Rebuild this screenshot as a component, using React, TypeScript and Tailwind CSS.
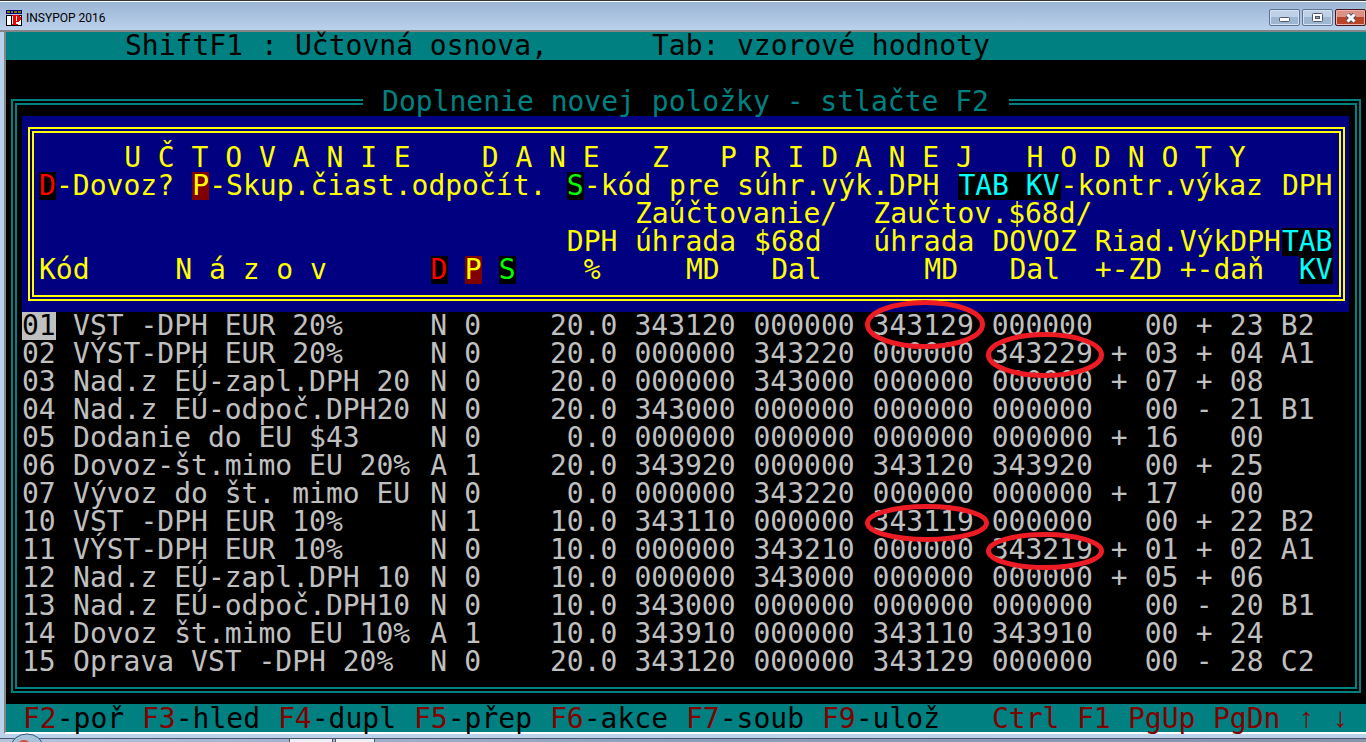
import type { ReactNode } from 'react';

type Segment = { at: number; text: string; tone?: string };
type Mark = { col: 'md2' | 'dal2'; box: string; w: number; h: number };
type Row = {
  kod: string;
  nazov: string;
  d: string;
  p: string;
  dph: string;
  md: string;
  dal: string;
  md2: string;
  dal2: string;
  zdSign: string;
  zd: string;
  danSign: string;
  dan: string;
  kv: string;
  mark?: Mark;
};

const RED = 'bg-black text-[#ff0000]';
const MAROON = 'bg-[#800000] text-[#ffff00]';
const GREEN = 'bg-black text-[#00ff00]';
const CYAN = 'bg-black text-[#00ffff]';

const topLine: Segment[] = [
  { at: 7, text: 'ShiftF1' },
  { at: 15, text: ':' },
  { at: 17, text: 'Učtovná osnova,' },
  { at: 38, text: 'Tab:' },
  { at: 43, text: 'vzorové hodnoty' },
];

const headerLines: Segment[][] = [
  [
    { at: 5, text: 'U Č T O V A N I E' },
    { at: 26, text: 'D A N E' },
    { at: 36, text: 'Z' },
    { at: 40, text: 'P R I D A N E J' },
    { at: 58, text: 'H O D N O T Y' },
  ],
  [
    { at: 0, text: 'D', tone: RED },
    { at: 1, text: '-Dovoz?' },
    { at: 9, text: 'P', tone: MAROON },
    { at: 10, text: '-Skup.čiast.odpočít.' },
    { at: 31, text: 'S', tone: GREEN },
    { at: 32, text: '-kód' },
    { at: 37, text: 'pre' },
    { at: 41, text: 'súhr.výk.DPH' },
    { at: 54, text: 'TAB KV', tone: CYAN },
    { at: 60, text: '-kontr.výkaz' },
    { at: 73, text: 'DPH' },
  ],
  [
    { at: 35, text: 'Zaúčtovanie/' },
    { at: 49, text: 'Zaučtov.$68d/' },
  ],
  [
    { at: 31, text: 'DPH' },
    { at: 35, text: 'úhrada' },
    { at: 42, text: '$68d' },
    { at: 49, text: 'úhrada' },
    { at: 56, text: 'DOVOZ' },
    { at: 62, text: 'Riad.' },
    { at: 67, text: 'VýkDPH' },
    { at: 73, text: 'TAB', tone: CYAN },
  ],
  [
    { at: 0, text: 'Kód' },
    { at: 8, text: 'N á z o v' },
    { at: 23, text: 'D', tone: RED },
    { at: 25, text: 'P', tone: MAROON },
    { at: 27, text: 'S', tone: GREEN },
    { at: 32, text: '%' },
    { at: 38, text: 'MD' },
    { at: 43, text: 'Dal' },
    { at: 52, text: 'MD' },
    { at: 57, text: 'Dal' },
    { at: 62, text: '+-ZD' },
    { at: 67, text: '+-daň' },
    { at: 74, text: 'KV', tone: CYAN },
  ],
];

const row = (line: string, mark?: Mark): Row => {
  const [kod, nazov, d, p, dph, md, dal, md2, dal2, zdSign, zd, danSign, dan, kv] = line.split('|');
  return { kod, nazov, d, p, dph, md, dal, md2, dal2, zdSign, zd, danSign, dan, kv, mark };
};

const rows: Row[] = [
  row('01|VST -DPH EUR 20%|N|0|20.0|343120|000000|343129|000000||00|+|23|B2', { col: 'md2', box: '-left-2 -top-3', w: 120, h: 49 }),
  row('02|VÝST-DPH EUR 20%|N|0|20.0|000000|343220|000000|343229|+|03|+|04|A1', { col: 'dal2', box: '-left-1.5 -top-2', w: 118, h: 46 }),
  row('03|Nad.z EÚ-zapl.DPH 20|N|0|20.0|000000|343000|000000|000000|+|07|+|08|'),
  row('04|Nad.z EÚ-odpoč.DPH20|N|0|20.0|343000|000000|000000|000000||00|-|21|B1'),
  row('05|Dodanie do EU $43|N|0|0.0|000000|000000|000000|000000|+|16||00|'),
  row('06|Dovoz-št.mimo EU 20%|A|1|20.0|343920|000000|343120|343920||00|+|25|'),
  row('07|Vývoz do št. mimo EU|N|0|0.0|000000|343220|000000|000000|+|17||00|'),
  row('10|VST -DPH EUR 10%|N|1|10.0|343110|000000|343119|000000||00|+|22|B2', { col: 'md2', box: '-left-2 -top-1', w: 124, h: 38 }),
  row('11|VÝST-DPH EUR 10%|N|0|10.0|000000|343210|000000|343219|+|01|+|02|A1', { col: 'dal2', box: '-left-1.5 -top-1', w: 118, h: 38 }),
  row('12|Nad.z EÚ-zapl.DPH 10|N|0|10.0|000000|343000|000000|000000|+|05|+|06|'),
  row('13|Nad.z EÚ-odpoč.DPH10|N|0|10.0|343000|000000|000000|000000||00|-|20|B1'),
  row('14|Dovoz št.mimo EU 10%|A|1|10.0|343910|000000|343110|343910||00|+|24|'),
  row('15|Oprava VST -DPH 20%|N|0|20.0|343120|000000|343129|000000||00|-|28|C2'),
];

// column widths in characters, 78 in total
const colWidths = [
  'w-[51px]', 'w-[357px]', 'w-[34px]', 'w-[85px]', 'w-[85px]', 'w-[119px]', 'w-[119px]',
  'w-[119px]', 'w-[119px]', 'w-[34px]', 'w-[51px]', 'w-[34px]', 'w-[51px]', 'w-[68px]',
];

const keys = [
  { at: 1, name: 'F2', label: '-poř' },
  { at: 8, name: 'F3', label: '-hled' },
  { at: 16, name: 'F4', label: '-dupl' },
  { at: 24, name: 'F5', label: '-přep' },
  { at: 32, name: 'F6', label: '-akce' },
  { at: 40, name: 'F7', label: '-soub' },
  { at: 48, name: 'F9', label: '-ulož' },
  { at: 58, name: 'Ctrl', label: '' },
  { at: 63, name: 'F1', label: '' },
  { at: 66, name: 'PgUp', label: '' },
  { at: 71, name: 'PgDn', label: '' },
  { at: 76, name: '↑', label: '' },
  { at: 78, name: '↓', label: '' },
];

const gridPlace = (at: number, length: number) => ({ gridColumn: `${at + 1} / span ${length}` });

function Line({ segments, className }: { segments: Segment[]; className: string }) {
  return (
    <div className={`grid h-7 whitespace-pre ${className}`}>
      {segments.map((s) => (
        <span key={s.at} className={`min-w-0 ${s.tone ?? ''}`} style={gridPlace(s.at, s.text.length)}>
          {s.text}
        </span>
      ))}
    </div>
  );
}

function Ring({ box, w, h }: Mark) {
  return (
    <svg className={`absolute z-10 ${box}`} width={w} height={h} aria-hidden="true">
      <ellipse cx={w / 2} cy={h / 2} rx={w / 2 - 2.5} ry={h / 2 - 2.5} fill="none" stroke="#ed1c24" strokeWidth="5" />
    </svg>
  );
}

function AppIcon() {
  return (
    <svg width="16" height="16" viewBox="0 0 16 16" shapeRendering="crispEdges" aria-hidden="true">
      <rect width="16" height="4" fill="#000080" />
      <path d="M1 1h3v2H1zM5 1h2v2H5zM8 1h3v2H8zM12 1h3v2h-3z" fill="#808000" />
      <rect x="0.5" y="5.5" width="15" height="10" fill="#fff" stroke="#000" />
      <path d="M5.5 5v10" stroke="#000" />
      <path d="M6 5h7v1h1v1h1v3h-1v1h-1v1h-3v2h2v1H6v-1h1V6H6zM10 6v5h1V6z" fill="#f00000" fillRule="evenodd" />
    </svg>
  );
}

function WindowButton({ label, className, children }: { label: string; className: string; children: ReactNode }) {
  return (
    <button type="button" aria-label={label} className={`flex h-[17px] w-[31px] items-center justify-center rounded-xs border ${className}`}>
      {children}
    </button>
  );
}

const glass = 'border-[#5f7494] bg-linear-to-b from-[#bfd1e6] from-50% to-[#9db6d2] to-50% shadow-[inset_0_0_0_1px_#d3e1f0]';

function TitleBar() {
  return (
    <header className="flex h-8 items-center border-t border-[#30353f] border-b-2 border-b-[#858585] bg-linear-to-b from-[#9ab4d3] to-[#bad1ec] pt-1 pl-1.5 shadow-[inset_0_1px_0_#fff]">
      <AppIcon />
      <h1 className="ml-1 flex-1 font-[Roboto,sans-serif] text-[12px] text-black">INSYPOP 2016</h1>
      <div className="flex gap-0.5">
        <WindowButton label="Minimalizovať" className={glass}>
          <svg width="11" height="5" className="mt-1"><rect x="0.5" y="0.5" width="10" height="4" rx="1" fill="#fff" stroke="#535666" /></svg>
        </WindowButton>
        <WindowButton label="Maximalizovať" className={glass}>
          <svg width="11" height="9">
            <rect x="0.5" y="0.5" width="10" height="8" rx="1" fill="#fff" stroke="#535666" />
            <rect x="3.5" y="3.5" width="4" height="2" fill="#8aa4c6" stroke="#535666" />
          </svg>
        </WindowButton>
        <WindowButton label="Zavrieť" className="border-[#4a1420] bg-linear-to-b from-[#dd9184] from-50% to-[#bb4327] to-50% shadow-[inset_0_0_0_1px_#e8b5aa]">
          <svg width="12" height="10">
            <path d="M2.5 1.5l7 7M9.5 1.5l-7 7" stroke="#535666" strokeWidth="5" />
            <path d="M2.5 1.5l7 7M9.5 1.5l-7 7" stroke="#fff" strokeWidth="3" />
          </svg>
        </WindowButton>
      </div>
    </header>
  );
}

export default function App() {
  return (
    <div className="bg-[#b9d1ea]">
      <TitleBar />
      <main className="ml-1 border-b-2 border-l-2 border-b-white border-l-[#858585] bg-black font-['DejaVu_Sans_Mono','Liberation_Mono',monospace] text-[28px] leading-7">
        <Line segments={topLine} className="grid-cols-[repeat(80,minmax(0,1fr))] bg-[#008080] text-black" />

        <fieldset className="mt-7 mr-[5px] ml-[5px] min-w-0 border-6 border-double border-[#008080] pr-1.5 pb-[11px] pl-[5px]">
          <legend className="mx-auto w-[646px] text-center whitespace-nowrap text-[#008080]">
            Doplnenie novej položky - stlačte F2
          </legend>

          <section className="bg-[#000080] py-[11px] pr-1 pl-1.5">
            <div className="border-6 border-double border-[#ffff00] py-[11px] pr-1.5 pl-[5px] text-[#ffff00]">
              {headerLines.map((segments, i) => (
                <Line key={i} segments={segments} className="grid-cols-[repeat(76,minmax(0,1fr))]" />
              ))}
            </div>
          </section>

          <table className="w-full table-fixed whitespace-pre text-[#c0c0c0]">
            <colgroup>
              {colWidths.map((w, i) => (
                <col key={i} className={w} />
              ))}
            </colgroup>
            <tbody>
              {rows.map((r, i) => (
                <tr key={r.kod} className="h-7">
                  <td className="p-0">
                    <span className={i === 0 ? 'block w-[34px] bg-[#c0c0c0] text-black' : 'block'}>{r.kod}</span>
                  </td>
                  <td className="p-0">{r.nazov}</td>
                  <td className="p-0">{r.d}</td>
                  <td className="p-0">{r.p}</td>
                  <td className="p-0 pr-[17px] text-right">{r.dph}</td>
                  <td className="p-0">{r.md}</td>
                  <td className="p-0">{r.dal}</td>
                  <td className="relative p-0">
                    {r.md2}
                    {r.mark?.col === 'md2' && <Ring {...r.mark} />}
                  </td>
                  <td className="relative p-0">
                    {r.dal2}
                    {r.mark?.col === 'dal2' && <Ring {...r.mark} />}
                  </td>
                  <td className="p-0">{r.zdSign}</td>
                  <td className="p-0">{r.zd}</td>
                  <td className="p-0">{r.danSign}</td>
                  <td className="p-0">{r.dan}</td>
                  <td className="p-0">{r.kv}</td>
                </tr>
              ))}
            </tbody>
          </table>
        </fieldset>

        <nav className="mt-[11px] grid h-7 grid-cols-[repeat(80,minmax(0,1fr))] bg-[#008080]">
          {keys.map((k) => (
            <button
              key={k.at}
              type="button"
              className="min-w-0 text-left whitespace-nowrap text-black"
              style={gridPlace(k.at, k.name.length + k.label.length)}
            >
              <span className={/[↑↓]/.test(k.name) ? "font-['Liberation_Mono',monospace] text-[#800000]" : 'text-[#800000]'}>
                {k.name}
              </span>
              {k.label}
            </button>
          ))}
        </nav>
      </main>

      {/* strip of the desktop taskbar under the window */}
      <footer className="relative mt-1 flex h-1 items-end border-t border-[#4b5468] bg-linear-to-r from-[#b4c4dd] via-[#8d9dbd] to-[#8794ad]">
        <svg className="absolute bottom-0 left-3" width="30" height="9" aria-hidden="true">
          <ellipse cx="15" cy="14" rx="16" ry="13" fill="#a9c3da" stroke="#2c5a80" />
          <ellipse cx="12" cy="11" rx="6" ry="4" fill="#c9543a" />
        </svg>
        <span className="ml-[289px] h-[3px] w-11 border-x border-[#4b5468] bg-[#eef2f8]" />
        <span className="ml-0.5 h-[3px] w-10 border-x border-[#4b5468] bg-[#eef2f8]" />
      </footer>
    </div>
  );
}
